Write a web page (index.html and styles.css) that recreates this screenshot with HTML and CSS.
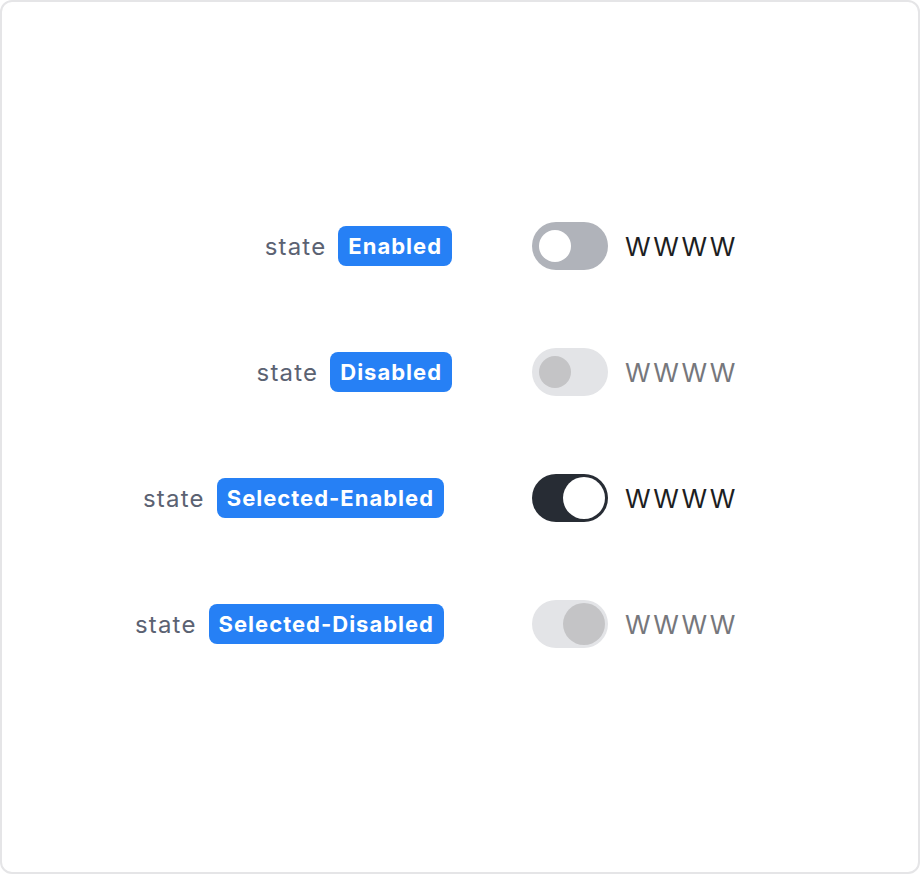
FILE: index.html
```html
<!DOCTYPE html>
<html lang="en">
<head>
<meta charset="utf-8">
<title>Switch states</title>
<link rel="stylesheet" href="styles.css">
</head>
<body>
<div class="frame">
  <div class="grid">
    <div class="label"><span class="state">state</span><span class="badge">Enabled</span></div>
    <div class="control"><span class="switch"><span class="thumb"></span></span><span class="text">WWWW</span></div>

    <div class="label"><span class="state">state</span><span class="badge">Disabled</span></div>
    <div class="control disabled"><span class="switch"><span class="thumb"></span></span><span class="text">WWWW</span></div>

    <div class="label wide"><span class="state">state</span><span class="badge">Selected-Enabled</span></div>
    <div class="control selected"><span class="switch"><span class="thumb"></span></span><span class="text">WWWW</span></div>

    <div class="label wide"><span class="state">state</span><span class="badge">Selected-Disabled</span></div>
    <div class="control selected disabled"><span class="switch"><span class="thumb"></span></span><span class="text">WWWW</span></div>
  </div>
</div>
</body>
</html>
```

FILE: styles.css
```css
html, body {
  margin: 0;
  padding: 0;
  background: #ffffff;
}
body {
  font-family: Inter, "Noto Sans", sans-serif;
}
.frame {
  box-sizing: border-box;
  width: 920px;
  height: 874px;
  border: 2px solid #e5e5e7;
  border-radius: 12px;
  display: flex;
  align-items: center;
  padding-left: 130px;
}
.grid {
  display: grid;
  grid-template-columns: 320px auto;
  column-gap: 80px;
  row-gap: 78px;
  margin-top: -4px;
}
.label {
  display: flex;
  align-items: center;
  justify-content: flex-end;
  gap: 12px;
  height: 48px;
}
.label.wide {
  padding-right: 8px;
}
.state {
  font-size: 24px;
  letter-spacing: 1.2px;
  color: #5b6272;
}
.badge {
  background: #2680f5;
  color: #ffffff;
  font-weight: 700;
  font-size: 22px;
  letter-spacing: 1px;
  line-height: 40px;
  height: 40px;
  padding: 0 10px;
  border-radius: 8px;
}
.control {
  display: flex;
  align-items: center;
  gap: 17px;
  height: 48px;
}
.switch {
  position: relative;
  width: 76px;
  height: 48px;
  border-radius: 24px;
  background: #b0b3ba;
  flex: none;
}
.thumb {
  position: absolute;
  left: 7px;
  top: 8px;
  width: 32px;
  height: 32px;
  border-radius: 50%;
  background: #ffffff;
}
.text {
  font-size: 26px;
  color: #1d1e22;
  letter-spacing: 2px;
}
.control.disabled .switch {
  background: #e3e4e7;
}
.control.disabled .thumb {
  background: #c4c4c6;
}
.control.disabled .text {
  color: #76777c;
}
.control.selected .switch {
  background: #272c34;
}
.control.selected .thumb {
  left: auto;
  right: 3px;
  top: 3px;
  width: 42px;
  height: 42px;
}
.control.selected.disabled .switch {
  background: #e3e4e7;
}
.control.selected.disabled .thumb {
  background: #c4c4c6;
}
```
